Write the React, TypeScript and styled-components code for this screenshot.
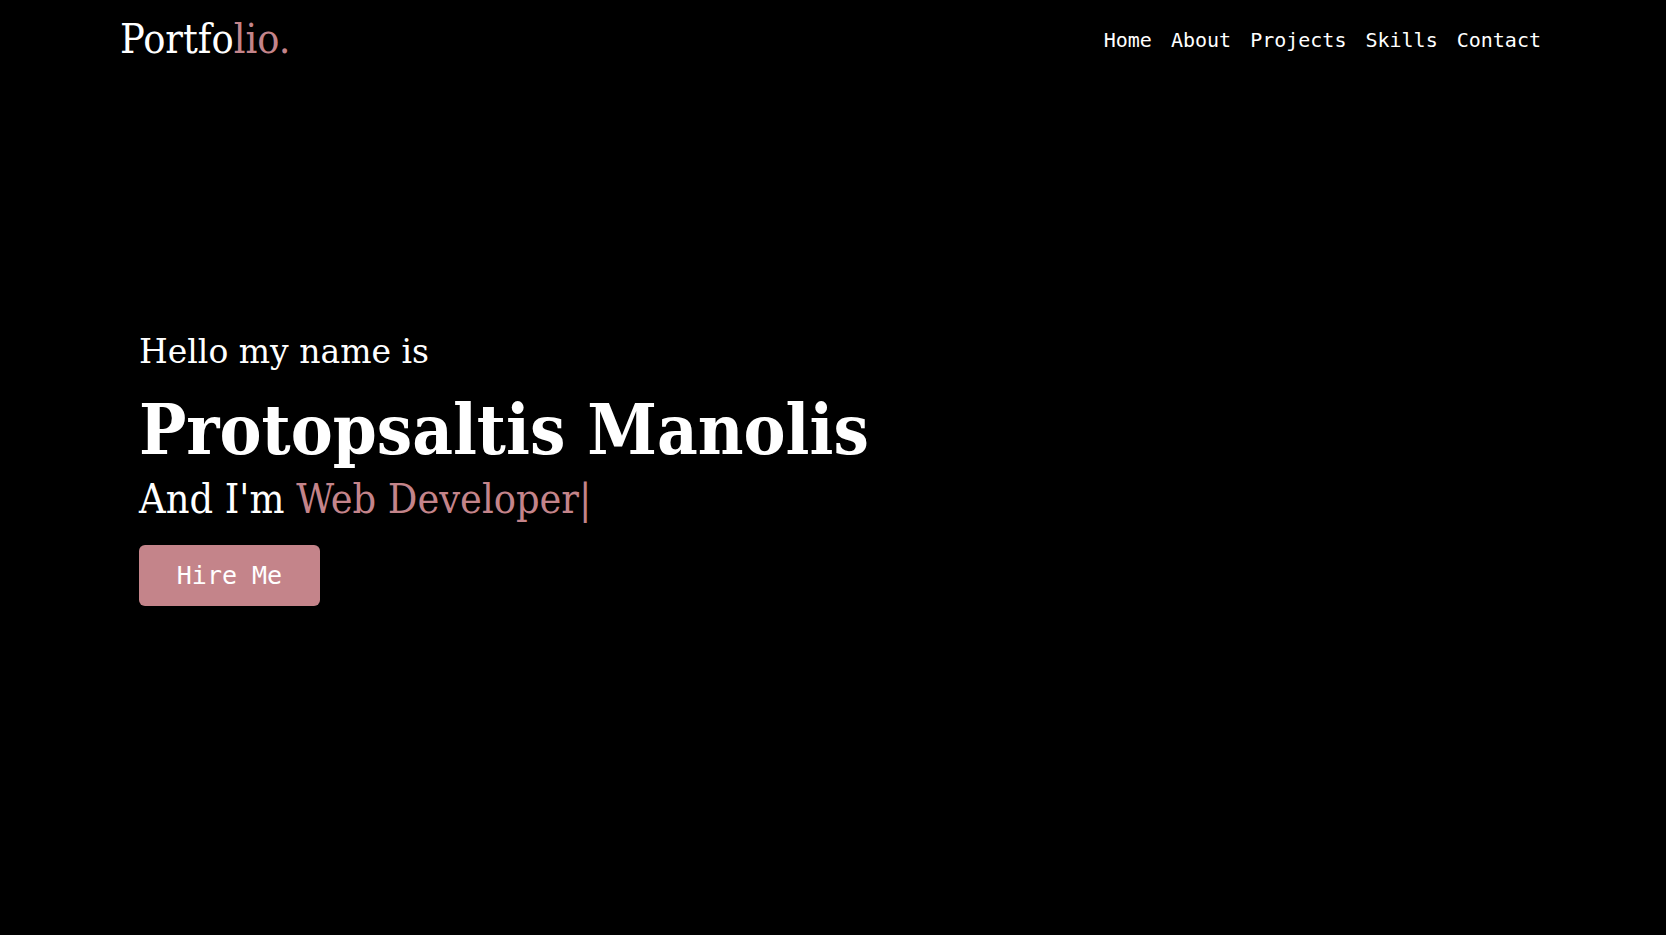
import React from "react";
import styled, { createGlobalStyle } from "styled-components";

const GlobalStyle = createGlobalStyle`
  html, body {
    margin: 0;
    padding: 0;
    background: #000;
  }
  * { box-sizing: border-box; }
  ::-webkit-scrollbar { width: 4px; }
  ::-webkit-scrollbar-track { background: #f1f1f1; }
  ::-webkit-scrollbar-thumb { background: #c1c1c1; }
`;

const ACCENT = "#c4848a";
const SERIF = `"DejaVu Serif", serif`;
const SERIF_NARROW = `"DejaVu Serif Condensed", "DejaVu Serif", serif`;
const MONO = `"DejaVu Sans Mono", "Liberation Mono", monospace`;

const Page = styled.div`
  background: #000;
  color: #fff;
`;

const Header = styled.header`
  display: flex;
  align-items: center;
  justify-content: space-between;
  height: 76px;
  padding: 0 125px 0 120px;
`;

const Logo = styled.a`
  font-family: ${SERIF_NARROW};
  font-size: 41px;
  line-height: 1;
  margin-top: 3px;
  color: #fff;
  text-decoration: none;
`;

const Accent = styled.span`
  color: ${ACCENT};
`;

const Nav = styled.nav`
  display: flex;
  gap: 19px;
  margin-top: 3px;
`;

const NavLink = styled.a`
  font-family: ${MONO};
  font-size: 20px;
  color: #fff;
  text-decoration: none;
`;

const Hero = styled.section`
  height: calc(100vh - 76px);
  display: flex;
  flex-direction: column;
  justify-content: center;
  padding: 0 0 82px 139px;
`;

const Greeting = styled.h3`
  margin: 0;
  font-family: ${SERIF};
  font-weight: 400;
  font-size: 33px;
  line-height: 58px;
`;

const Name = styled.h1`
  margin: 0;
  font-family: ${SERIF_NARROW};
  font-weight: 700;
  font-size: 70px;
  line-height: 98px;
`;

const Role = styled.h2`
  margin: 0;
  font-family: ${SERIF_NARROW};
  font-weight: 400;
  font-size: 41px;
  line-height: 40px;
`;

const HireButton = styled.button`
  align-self: flex-start;
  margin-top: 26px;
  width: 181px;
  height: 61px;
  border: none;
  border-radius: 6px;
  background: ${ACCENT};
  color: #fff;
  font-family: ${MONO};
  font-size: 25px;
  cursor: pointer;
`;

export default function App() {
  return (
    <Page>
      <GlobalStyle />
      <Header>
        <Logo href="#">
          Portfo<Accent>lio.</Accent>
        </Logo>
        <Nav>
          <NavLink href="#home">Home</NavLink>
          <NavLink href="#about">About</NavLink>
          <NavLink href="#projects">Projects</NavLink>
          <NavLink href="#skills">Skills</NavLink>
          <NavLink href="#contact">Contact</NavLink>
        </Nav>
      </Header>
      <Hero id="home">
        <Greeting>Hello my name is</Greeting>
        <Name>Protopsaltis Manolis</Name>
        <Role>
          And I'm <Accent>Web Developer|</Accent>
        </Role>
        <HireButton>Hire Me</HireButton>
      </Hero>
    </Page>
  );
}
